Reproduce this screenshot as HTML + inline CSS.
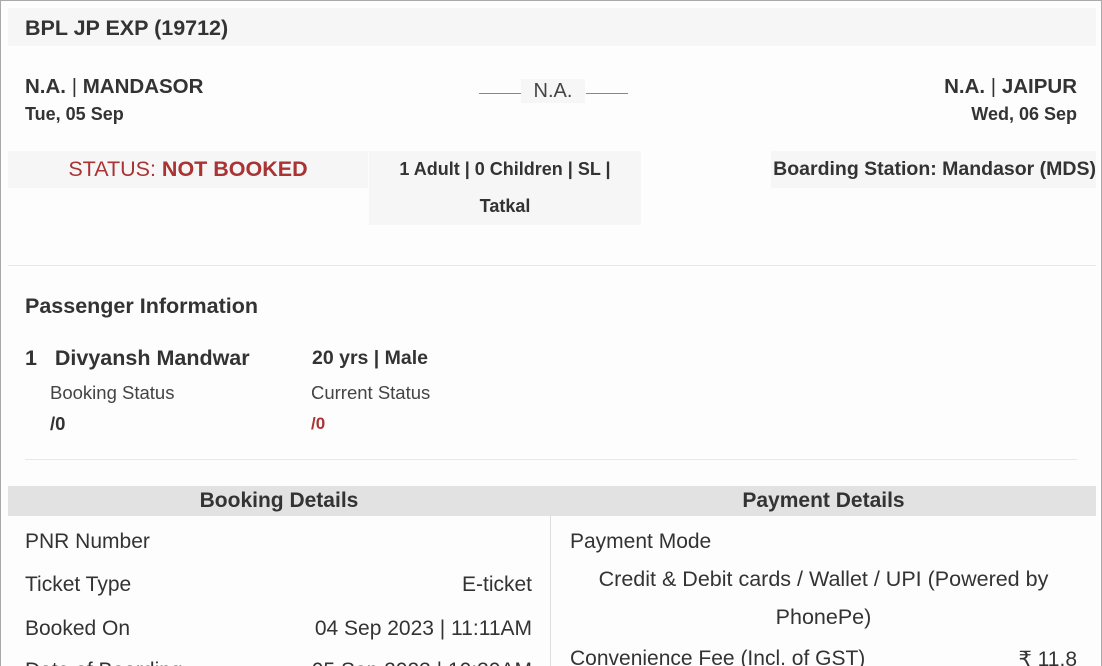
<!DOCTYPE html>
<html><head><style>
*{margin:0;padding:0;box-sizing:border-box}
html,body{width:1102px;height:666px;overflow:hidden}
body{background:#fff;font-family:"Liberation Sans",Arial,sans-serif;color:#333;position:relative}
.frame{position:absolute;left:0;top:0;width:1102px;height:666px;border:1px solid #a9a9a9;border-bottom:none;background:#fdfdfd}
.a{position:absolute;white-space:nowrap}
.b{font-weight:bold}
</style></head><body>
<div class="frame"></div>
<div class="a" style="left:8px;top:8px;width:1088px;height:38px;background:#f6f6f6"></div>
<div class="a b" style="left:25px;top:16px;font-size:21.5px">BPL JP EXP (19712)</div>

<div class="a" style="left:25px;top:75px;font-size:20.5px"><b>N.A.</b> | <b>MANDASOR</b></div>
<div class="a b" style="left:25px;top:104px;font-size:18px">Tue, 05 Sep</div>

<div class="a" style="left:479px;top:93px;width:42px;border-top:1px solid #888"></div>
<div class="a" style="left:586px;top:93px;width:42px;border-top:1px solid #888"></div>
<div class="a" style="left:521px;top:79px;width:64px;height:24px;background:#f6f6f6;text-align:center;font-size:20px;color:#444;line-height:24px">N.A.</div>

<div class="a" style="right:25px;top:75px;font-size:20.5px"><b>N.A.</b> | <b>JAIPUR</b></div>
<div class="a b" style="right:25px;top:104px;font-size:18px">Wed, 06 Sep</div>

<div class="a" style="left:8px;top:151px;width:360px;height:37px;background:#f6f6f6;text-align:center;font-size:21.5px;line-height:37px;color:#a33"><span>STATUS: </span><b>NOT BOOKED</b></div>
<div class="a" style="left:369px;top:151px;width:272px;height:74px;background:#f6f6f6;text-align:center;font-size:18px;font-weight:bold;line-height:37px;white-space:normal">1 Adult | 0 Children | SL |<br>Tatkal</div>
<div class="a" style="left:771px;top:151px;width:325px;height:37px;background:#f6f6f6;font-size:19.5px;font-weight:bold;line-height:37px;text-align:right">Boarding Station: Mandasor (MDS)</div>

<div class="a" style="left:8px;top:265px;width:1088px;border-top:1px solid #e8e8e8"></div>
<div class="a b" style="left:25px;top:294px;font-size:21.5px">Passenger Information</div>
<div class="a b" style="left:25px;top:346px;font-size:21.5px">1&nbsp;&nbsp;&nbsp;Divyansh Mandwar</div>
<div class="a b" style="left:312px;top:347px;font-size:19.5px">20 yrs | Male</div>
<div class="a" style="left:50px;top:382px;font-size:18.5px;color:#444">Booking Status</div>
<div class="a" style="left:311px;top:382px;font-size:18.5px;color:#444">Current Status</div>
<div class="a b" style="left:50px;top:413px;font-size:18.5px">/0</div>
<div class="a b" style="left:311px;top:414px;font-size:17px;color:#a33">/0</div>
<div class="a" style="left:25px;top:459px;width:1052px;border-top:1px solid #e8e8e8"></div>

<div class="a" style="left:8px;top:486px;width:1088px;height:30px;background:#e2e2e2"></div>
<div class="a b" style="left:8px;top:489px;width:542px;text-align:center;font-size:21px">Booking Details</div>
<div class="a b" style="left:551px;top:489px;width:545px;text-align:center;font-size:21px">Payment Details</div>
<div class="a" style="left:550px;top:516px;height:160px;border-left:1px solid #ddd"></div>

<div class="a" style="left:25px;top:530px;font-size:21px">PNR Number</div>
<div class="a" style="left:25px;top:573px;font-size:21px">Ticket Type</div>
<div class="a" style="right:570px;top:573px;font-size:21px">E-ticket</div>
<div class="a" style="left:25px;top:617px;font-size:21px">Booked On</div>
<div class="a" style="right:570px;top:617px;font-size:21px">04 Sep 2023 | 11:11AM</div>
<div class="a" style="left:25px;top:659px;font-size:21px">Date of Boarding</div>
<div class="a" style="right:570px;top:659px;font-size:21px">05 Sep 2023 | 10:30AM</div>

<div class="a" style="left:570px;top:530px;font-size:21px">Payment Mode</div>
<div class="a" style="left:551px;top:567px;width:545px;text-align:center;font-size:21.5px">Credit &amp; Debit cards / Wallet / UPI (Powered by</div>
<div class="a" style="left:551px;top:605px;width:545px;text-align:center;font-size:21.5px">PhonePe)</div>
<div class="a" style="left:570px;top:647px;font-size:21px">Convenience Fee (Incl. of GST)</div>
<div class="a" style="right:25px;top:647px;font-size:21px">₹ 11.8</div>
</body></html>
